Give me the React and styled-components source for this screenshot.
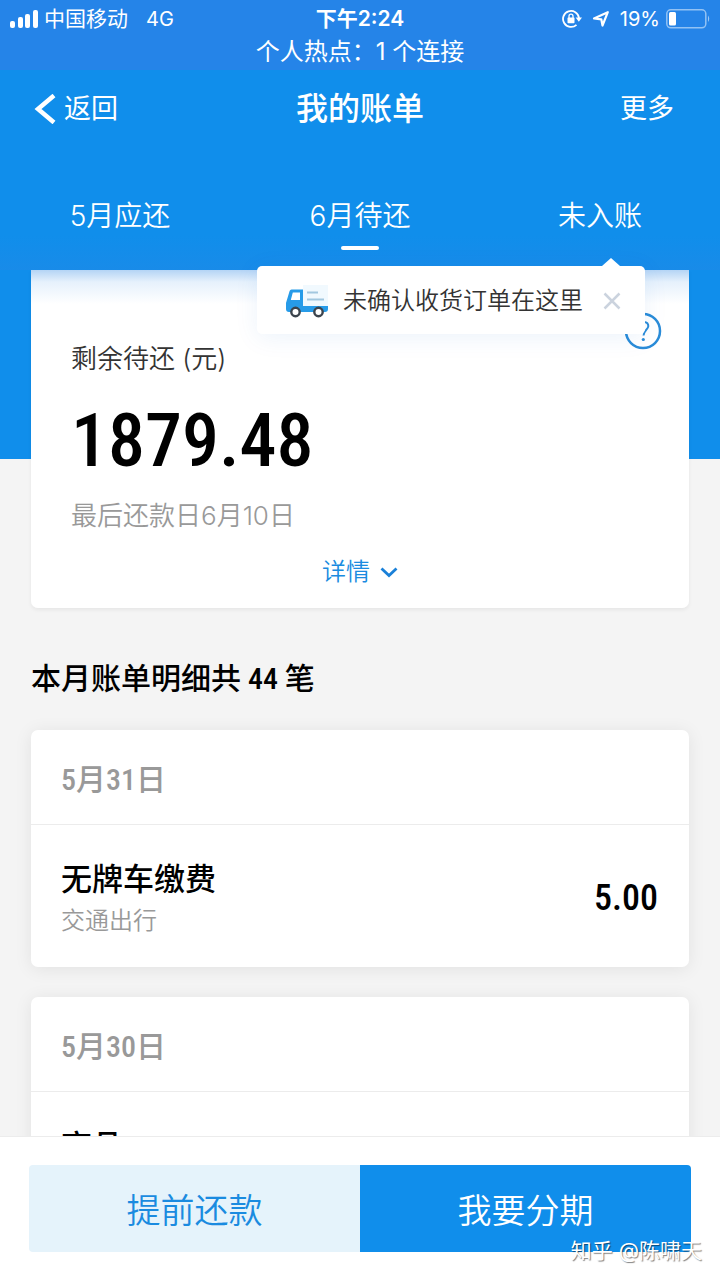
import React from 'react';
import styled, { createGlobalStyle, ThemeProvider } from 'styled-components';

const theme = {
  colors: {
    blue: '#108eeb',
    statusBlue: '#2584e8',
    link: '#1a8be0',
    paleBlue: '#e5f3fb',
    page: '#f4f4f4',
    grey: '#999',
    line: '#ececec',
  },
  fonts: {
    body: 'Inter, "Noto Sans CJK SC", sans-serif',
    number: '"Roboto Condensed", "Noto Sans CJK SC", sans-serif',
  },
};

const GlobalStyle = createGlobalStyle`
  * {
    box-sizing: border-box;
  }

  body {
    margin: 0;
    font-family: ${theme.fonts.body};
  }

  h1, h2, h3, p, ul {
    margin: 0;
    padding: 0;
    list-style: none;
  }

  button {
    margin: 0;
    padding: 0;
    border: 0;
    background: none;
    font-family: inherit;
    cursor: pointer;
  }
`;

const Screen = styled.div`
  position: relative;
  display: flex;
  flex-direction: column;
  height: 100vh;
  overflow: hidden;
  background: ${(props) => props.theme.colors.page};
`;

const Header = styled.header`
  position: relative;
  z-index: 1;
  color: #fff;
  background: ${(props) => props.theme.colors.blue};
`;

const StatusBar = styled.div`
  height: 70px;
  padding: 4px 10px 0;
  background: ${(props) => props.theme.colors.statusBlue};
`;

const StatusRow = styled.div`
  display: grid;
  grid-template-columns: 1fr auto 1fr;
  align-items: center;
  height: 30px;
  font-size: 21px;
  line-height: 30px;
`;

const StatusGroup = styled.div`
  display: flex;
  align-items: center;
  justify-content: ${(props) => (props.$end ? 'flex-end' : 'flex-start')};
  gap: ${(props) => (props.$end ? '10px' : '6px')};
`;

const Network = styled.span`
  margin-left: 12px;
  font-size: 20px;
`;

const Time = styled.span`
  font-weight: 600;
`;

const Battery = styled.span`
  display: flex;
  align-items: center;
  gap: 6px;
  font-size: 20px;
`;

const Hotspot = styled.p`
  font-size: 24px;
  line-height: 36px;
  text-align: center;
`;

const NavBar = styled.div`
  display: grid;
  grid-template-columns: 1fr auto 1fr;
  align-items: center;
  height: 76px;
  padding: 2px 34px 0;
`;

const NavButton = styled.button`
  display: flex;
  align-items: center;
  justify-self: start;
  gap: 8px;
  color: #fff;
  font-size: 27px;
  line-height: 40px;
`;

const MoreButton = styled(NavButton)`
  justify-self: end;
  margin-right: 12px;
`;

const Title = styled.h1`
  font-size: 32px;
  font-weight: 500;
  line-height: 48px;
`;

const Tabs = styled.nav`
  position: relative;
  display: grid;
  grid-template-columns: repeat(3, 1fr);
  height: 124px;
  padding-top: 48px;
  background: linear-gradient(transparent 90px, rgba(50, 130, 225, 0.25));
`;

const Tab = styled.button`
  display: flex;
  flex-direction: column;
  align-items: center;
  align-self: start;
  color: #fff;
  font-size: 28px;
  font-weight: 350;
  line-height: 44px;

  &::after {
    content: '';
    width: 38px;
    height: 4px;
    margin-top: 8px;
    border-radius: 2px;
    background: ${(props) => (props.$active ? '#fff' : 'transparent')};
  }
`;

const Tooltip = styled.div`
  position: absolute;
  right: 75px;
  bottom: -64px;
  display: flex;
  align-items: center;
  height: 68px;
  padding: 2px 24px 0 28px;
  border-radius: 5px;
  color: #333;
  background: #fff;
  font-size: 24px;
  line-height: 36px;
  box-shadow: 0 4px 24px rgba(16, 100, 200, 0.08);

  &::before {
    content: '';
    position: absolute;
    right: 25px;
    top: -8px;
    border: solid transparent;
    border-width: 0 9px 8px;
    border-bottom-color: #fff;
  }
`;

const TooltipText = styled.span`
  margin: 0 20px 0 14px;
  font-weight: 350;
`;

const CloseButton = styled.button`
  display: flex;
`;

const Content = styled.main`
  flex: 1;
  min-height: 0;
  overflow-y: auto;
  scrollbar-width: none;
  padding: 0 31px;
  background: linear-gradient(${(props) => props.theme.colors.blue} 189px, transparent 189px);
`;

const Summary = styled.section`
  position: relative;
  padding: 67px 40px 18px;
  border-radius: 0 0 7px 7px;
  background: linear-gradient(#b4d4f5, #e6f1fc 12px, #fff 34px);
  box-shadow: 0 2px 4px rgba(0, 0, 0, 0.06);
`;

const SummaryLabel = styled.h2`
  color: #333;
  font-size: 26px;
  font-weight: 350;
  line-height: 44px;
`;

const Balance = styled.p`
  margin-top: 12px;
  font-family: ${(props) => props.theme.fonts.number};
  font-size: 74px;
  font-weight: 500;
  line-height: 96px;
`;

const DueDate = styled.p`
  margin-top: 7px;
  color: ${(props) => props.theme.colors.grey};
  font-size: 26px;
  font-weight: 350;
  line-height: 40px;
`;

const DetailButton = styled.button`
  display: flex;
  align-items: center;
  gap: 10px;
  margin: 18px auto 0;
  color: ${(props) => props.theme.colors.link};
  font-size: 24px;
  font-weight: 350;
  line-height: 36px;
`;

const HelpButton = styled.button`
  position: absolute;
  right: 27px;
  top: 42px;
  display: flex;
`;

const ListTitle = styled.h2`
  margin: 48px 0 28px;
  font-family: ${(props) => props.theme.fonts.number};
  font-size: 30px;
  font-weight: 500;
  line-height: 46px;
`;

const DayCard = styled.section`
  margin-bottom: 30px;
  border-radius: 7px;
  background: #fff;
  box-shadow: 0 2px 18px rgba(0, 0, 0, 0.08);
`;

const DayTitle = styled.h3`
  padding: 28px 30px 22px;
  border-bottom: 1px solid ${(props) => props.theme.colors.line};
  color: ${(props) => props.theme.colors.grey};
  font-family: ${(props) => props.theme.fonts.number};
  font-size: 30px;
  font-weight: 500;
  line-height: 44px;
`;

const BillRow = styled.li`
  display: flex;
  align-items: center;
  justify-content: space-between;
  padding: 31px 31px 27px 30px;
`;

const BillName = styled.p`
  font-size: 31px;
  font-weight: 500;
  line-height: 46px;
`;

const BillType = styled.p`
  color: ${(props) => props.theme.colors.grey};
  font-size: 24px;
  font-weight: 350;
  line-height: 38px;
`;

const Amount = styled.span`
  font-family: ${(props) => props.theme.fonts.number};
  font-size: 36px;
  font-weight: 500;
`;

const Footer = styled.footer`
  display: grid;
  grid-template-columns: 1fr 1fr;
  padding: 28px 29px;
  border-top: 1px solid ${(props) => props.theme.colors.line};
  background: #fff;
`;

const ActionButton = styled.button`
  height: 87px;
  border-radius: ${(props) => (props.$primary ? '0 4px 4px 0' : '4px 0 0 4px')};
  color: ${(props) => (props.$primary ? '#fff' : props.theme.colors.link)};
  background: ${(props) => (props.$primary ? props.theme.colors.blue : props.theme.colors.paleBlue)};
  font-size: 34px;
  font-weight: 350;
`;

const Watermark = styled.span`
  position: absolute;
  right: 18px;
  bottom: 14px;
  color: #fff;
  font-size: 21px;
  line-height: 30px;
  text-shadow: 1px 1px 1px rgba(0, 0, 0, 0.5);
`;

const SignalIcon = () => (
  <svg width="28" height="18" viewBox="0 0 28 18" fill="#fff" aria-hidden="true">
    <rect x="0" y="11" width="5" height="7" rx="2" />
    <rect x="8" y="7" width="5" height="11" rx="2" />
    <rect x="15" y="4" width="5" height="14" rx="2" />
    <rect x="23" y="0" width="5" height="18" rx="2" />
  </svg>
);

const RotationLockIcon = () => (
  <svg width="20" height="20" viewBox="0 0 20 20" fill="none" aria-hidden="true">
    <path d="M14.5 15.8A8 8 0 1 1 17 9" stroke="#fff" strokeWidth="1.8" />
    <path d="M13.6 8.5H20l-3.200 4.300z" fill="#fff" />
    <rect x="5.5" y="8.6" width="7" height="5.6" rx="0.8" fill="#fff" />
    <path d="M7 9V7.2a2 2 0 0 1 4 0V9" stroke="#fff" strokeWidth="1.3" />
  </svg>
);

const LocationIcon = () => (
  <svg width="18" height="18" viewBox="0 0 18 18" fill="none" aria-hidden="true">
    <path d="M2 8.5 15.800 2.200 10.500 15.500 9.300 9.300z" stroke="#fff" strokeWidth="2.200" strokeLinejoin="round" />
  </svg>
);

const BatteryIcon = () => (
  <svg width="44" height="20" viewBox="0 0 44 20" aria-hidden="true">
    <rect x="0.8" y="0.8" width="39" height="18" rx="4" fill="none" stroke="#fff" strokeOpacity="0.5" strokeWidth="1.5" />
    <rect x="3" y="3" width="7" height="13.6" rx="1.5" fill="#fff" />
    <path d="M42 6.5q2.4 3.2 0 6.5z" fill="#fff" fillOpacity="0.55" />
  </svg>
);

const BackIcon = () => (
  <svg width="22" height="30" viewBox="0 0 22 30" fill="none" aria-hidden="true">
    <path d="M20 1.5 4 15l16 13.5" stroke="#fff" strokeWidth="4.5" />
  </svg>
);

const TruckIcon = () => (
  <svg width="44" height="34" viewBox="0 0 44 34" fill="none" aria-hidden="true">
    <path d="M18 1h25v22H18z" fill="#f1f9fe" />
    <path d="M22 8.5h11M22 15.500h17" stroke="#a3c8df" strokeWidth="2" />
    <path d="M6.500 5.500H18V22h25v3q0 3-3 3H4q-3 0-3-3v-6L4.600 7q.5-1.500 1.900-1.500z" fill="#279be8" />
    <path d="M7.800 8.500H15V16H5.800z" fill="#fff" />
    <circle cx="10.500" cy="28" r="4.200" fill="#fff" stroke="#3c444d" strokeWidth="2.400" />
    <circle cx="33.500" cy="28" r="4.200" fill="#fff" stroke="#3c444d" strokeWidth="2.400" />
  </svg>
);

const CloseIcon = () => (
  <svg width="18" height="18" viewBox="0 0 18 18" fill="none" aria-hidden="true">
    <path d="m1.500 1.500 15 15M16.500 1.500l-15 15" stroke="#cbd3de" strokeWidth="2.500" />
  </svg>
);

const HelpIcon = () => (
  <svg width="38" height="38" viewBox="0 0 38 38" fill="none" stroke="#2a8cd8" aria-hidden="true">
    <circle cx="19" cy="19" r="17" strokeWidth="2.500" />
    <path d="M15.500 15q.2-5 4.500-5 4.500.2 4.300 4.300c-.2 3-4.300 4.200-4.800 9.200" strokeWidth="2" />
    <circle cx="19.300" cy="27.500" r="1.600" fill="#2a8cd8" stroke="none" />
  </svg>
);

const ChevronIcon = () => (
  <svg width="18" height="12" viewBox="0 0 18 12" fill="none" aria-hidden="true">
    <path d="m1.500 2.500 7.500 7 7.500-7" stroke="#1a80d8" strokeWidth="2.800" />
  </svg>
);

const tabs = ['5月应还', '6月待还', '未入账'];

const days = [
  { date: '5月31日', bills: [{ name: '无牌车缴费', type: '交通出行', amount: '5.00' }] },
  { date: '5月30日', bills: [{ name: '商品', type: '', amount: '' }] },
];

const Day = ({ date, bills }) => (
  <DayCard>
    <DayTitle>{date}</DayTitle>
    <ul>
      {bills.map((bill) => (
        <BillRow key={bill.name}>
          <div>
            <BillName>{bill.name}</BillName>
            <BillType>{bill.type}</BillType>
          </div>
          <Amount>{bill.amount}</Amount>
        </BillRow>
      ))}
    </ul>
  </DayCard>
);

const App = () => {
  return (
    <ThemeProvider theme={theme}>
      <GlobalStyle />
      <Screen lang="zh-CN">
        <Header>
          <StatusBar>
            <StatusRow>
              <StatusGroup>
                <SignalIcon />
                <span>中国移动</span>
                <Network>4G</Network>
              </StatusGroup>
              <Time>下午2:24</Time>
              <StatusGroup $end>
                <RotationLockIcon />
                <LocationIcon />
                <Battery>
                  19%
                  <BatteryIcon />
                </Battery>
              </StatusGroup>
            </StatusRow>
            <Hotspot>个人热点：1 个连接</Hotspot>
          </StatusBar>
          <NavBar>
            <NavButton>
              <BackIcon />
              返回
            </NavButton>
            <Title>我的账单</Title>
            <MoreButton>更多</MoreButton>
          </NavBar>
          <Tabs>
            {tabs.map((label, i) => (
              <Tab key={label} $active={i === 1}>{label}</Tab>
            ))}
            <Tooltip>
              <TruckIcon />
              <TooltipText>未确认收货订单在这里</TooltipText>
              <CloseButton aria-label="关闭">
                <CloseIcon />
              </CloseButton>
            </Tooltip>
          </Tabs>
        </Header>
        <Content>
          <Summary>
            <HelpButton aria-label="帮助">
              <HelpIcon />
            </HelpButton>
            <SummaryLabel>剩余待还 (元)</SummaryLabel>
            <Balance>1879.48</Balance>
            <DueDate>最后还款日6月10日</DueDate>
            <DetailButton>
              详情
              <ChevronIcon />
            </DetailButton>
          </Summary>
          <ListTitle>本月账单明细共 44 笔</ListTitle>
          {days.map((day) => (
            <Day key={day.date} {...day} />
          ))}
        </Content>
        <Footer>
          <ActionButton>提前还款</ActionButton>
          <ActionButton $primary>我要分期</ActionButton>
        </Footer>
        <Watermark>知乎 @陈啸天</Watermark>
      </Screen>
    </ThemeProvider>
  );
};

export default App;
